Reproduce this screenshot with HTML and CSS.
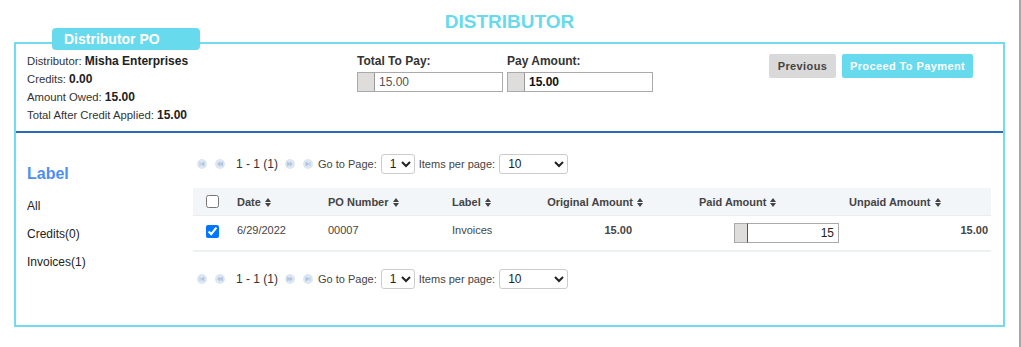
FILE: index.html
```html
<!DOCTYPE html>
<html lang="en">
<head>
    <meta charset="UTF-8">
    <meta name="viewport" content="width=device-width, initial-scale=1.0">
    <title>Distributor</title>
    <link rel="stylesheet" href="styles.css">
</head>
<body>
    <div class="page">
        <h1 class="title">DISTRIBUTOR</h1>

        <div class="box">
            <div class="tab">Distributor PO</div>

            <div class="top">
                <div class="info">
                    <p>Distributor: <strong>Misha Enterprises</strong></p>
                    <p>Credits: <strong>0.00</strong></p>
                    <p>Amount Owed: <strong>15.00</strong></p>
                    <p>Total After Credit Applied: <strong>15.00</strong></p>
                </div>

                <div class="pay-field">
                    <label>Total To Pay:</label>
                    <div class="input-group">
                        <span class="addon"></span>
                        <input type="text" class="readonly" value="15.00" readonly>
                    </div>
                </div>

                <div class="pay-field">
                    <label>Pay Amount:</label>
                    <div class="input-group">
                        <span class="addon"></span>
                        <input type="text" class="bold" value="15.00">
                    </div>
                </div>

                <div class="actions">
                    <button class="btn btn-grey">Previous</button>
                    <button class="btn btn-cyan">Proceed To Payment</button>
                </div>
            </div>

            <div class="bottom">
                <div class="sidebar">
                    <h2>Label</h2>
                    <a href="#">All</a>
                    <a href="#">Credits(0)</a>
                    <a href="#">Invoices(1)</a>
                </div>

                <div class="content">
                    <div class="pager">
                        <span class="pg-btn"><svg viewBox="0 0 10 10"><circle cx="5" cy="5" r="5"/><path d="M3 3v4M7 3L4.2 5 7 7z"/></svg></span>
                        <span class="pg-btn"><svg viewBox="0 0 10 10"><circle cx="5" cy="5" r="5"/><path d="M5 3L2.6 5 5 7zM7.6 3L5.2 5 7.6 7z"/></svg></span>
                        <span class="pg-text">1 - 1 (1)</span>
                        <span class="pg-btn"><svg viewBox="0 0 10 10"><circle cx="5" cy="5" r="5"/><path d="M2.4 3L4.8 5 2.4 7zM5 3L7.4 5 5 7z"/></svg></span>
                        <span class="pg-btn last"><svg viewBox="0 0 10 10"><circle cx="5" cy="5" r="5"/><path d="M7 3v4M3 3L5.8 5 3 7z"/></svg></span>
                        <span class="pg-label">Go to Page:</span>
                        <select class="sel-page"><option>1</option></select>
                        <span class="pg-label">Items per page:</span>
                        <select class="sel-items"><option>10</option><option>20</option></select>
                    </div>

                    <table class="grid">
                        <colgroup>
                            <col style="width:37px">
                            <col style="width:91px">
                            <col style="width:124px">
                            <col style="width:95px">
                            <col style="width:113px">
                            <col style="width:192px">
                            <col style="width:146px">
                        </colgroup>
                        <thead>
                            <tr>
                                <th class="c-check"><input type="checkbox"></th>
                                <th>Date <svg class="sort" viewBox="0 0 6 9"><path d="M0 4L3 0 6 4zM0 5L3 9 6 5z"/></svg></th>
                                <th>PO Number <svg class="sort" viewBox="0 0 6 9"><path d="M0 4L3 0 6 4zM0 5L3 9 6 5z"/></svg></th>
                                <th>Label <svg class="sort" viewBox="0 0 6 9"><path d="M0 4L3 0 6 4zM0 5L3 9 6 5z"/></svg></th>
                                <th class="c-orig">Original Amount <svg class="sort" viewBox="0 0 6 9"><path d="M0 4L3 0 6 4zM0 5L3 9 6 5z"/></svg></th>
                                <th class="c-paid">Paid Amount <svg class="sort" viewBox="0 0 6 9"><path d="M0 4L3 0 6 4zM0 5L3 9 6 5z"/></svg></th>
                                <th class="c-unpaid">Unpaid Amount <svg class="sort" viewBox="0 0 6 9"><path d="M0 4L3 0 6 4zM0 5L3 9 6 5z"/></svg></th>
                            </tr>
                        </thead>
                        <tbody>
                            <tr>
                                <td class="c-check"><input type="checkbox" checked></td>
                                <td>6/29/2022</td>
                                <td>00007</td>
                                <td>Invoices</td>
                                <td class="c-orig num">15.00</td>
                                <td class="c-paid-input">
                                    <div class="input-group small">
                                        <span class="addon"></span>
                                        <input type="text" value="15">
                                    </div>
                                </td>
                                <td class="c-unpaid num">15.00</td>
                            </tr>
                        </tbody>
                    </table>

                    <div class="pager pager-bottom">
                        <span class="pg-btn"><svg viewBox="0 0 10 10"><circle cx="5" cy="5" r="5"/><path d="M3 3v4M7 3L4.2 5 7 7z"/></svg></span>
                        <span class="pg-btn"><svg viewBox="0 0 10 10"><circle cx="5" cy="5" r="5"/><path d="M5 3L2.6 5 5 7zM7.6 3L5.2 5 7.6 7z"/></svg></span>
                        <span class="pg-text">1 - 1 (1)</span>
                        <span class="pg-btn"><svg viewBox="0 0 10 10"><circle cx="5" cy="5" r="5"/><path d="M2.4 3L4.8 5 2.4 7zM5 3L7.4 5 5 7z"/></svg></span>
                        <span class="pg-btn last"><svg viewBox="0 0 10 10"><circle cx="5" cy="5" r="5"/><path d="M7 3v4M3 3L5.8 5 3 7z"/></svg></span>
                        <span class="pg-label">Go to Page:</span>
                        <select class="sel-page"><option>1</option></select>
                        <span class="pg-label">Items per page:</span>
                        <select class="sel-items"><option>10</option><option>20</option></select>
                    </div>
                </div>
            </div>
        </div>
    </div>
</body>
</html>
```

FILE: styles.css
```css
body {
    margin: 0;
    font-family: 'Liberation Sans', Arial, sans-serif;
    font-size: 12px;
    color: #333;
    background: #fff;
}

.page {
    width: 1019px;
    height: 347px;
    border-right: 2px solid #a8a8a8;
    overflow: hidden;
}

.title {
    margin: 0;
    height: 42px;
    padding-top: 11px;
    box-sizing: border-box;
    text-align: center;
    font-size: 19px;
    line-height: 22px;
    font-weight: bold;
    color: #67daed;
}

.box {
    position: relative;
    margin-left: 14px;
    width: 991px;
    height: 285px;
    box-sizing: border-box;
    border: 2px solid #72dcee;
}

.tab {
    position: absolute;
    left: 36px;
    top: -16px;
    width: 148px;
    height: 22px;
    box-sizing: border-box;
    padding-left: 12px;
    background: #67daed;
    border-radius: 4px;
    color: #fff;
    font-size: 14px;
    font-weight: bold;
    line-height: 22px;
}

/* top section */
.top {
    display: flex;
    height: 89px;
    padding: 8px 30px 0 11px;
    box-sizing: border-box;
    border-bottom: 2px solid #2b6cb8;
}

.info {
    width: 330px;
}

.info p {
    margin: 0;
    font-size: 11.3px;
    line-height: 18px;
}

.info strong {
    font-size: 12px;
    color: #222;
}

.pay-field {
    width: 150px;
}

.pay-field label {
    display: block;
    font-weight: bold;
    line-height: 18px;
    color: #333;
}

.input-group {
    display: flex;
    width: 146px;
    height: 20px;
    margin-top: 2px;
}

.input-group .addon {
    width: 16px;
    background: #dedddb;
    border: 1px solid #aaa;
    border-right: 1px solid #999;
}

.input-group input {
    flex: 1;
    min-width: 0;
    margin: 0;
    padding: 0 4px;
    border: 1px solid #aaa;
    border-left: none;
    font-family: inherit;
    font-size: 12px;
    color: #333;
    outline: none;
}

.input-group input.readonly {
    color: #555;
}

.input-group input.bold {
    font-weight: bold;
    color: #111;
}

.actions {
    display: flex;
    gap: 6px;
    margin-left: auto;
    margin-top: 2px;
}

.btn {
    height: 24px;
    padding: 0;
    border: none;
    border-radius: 2px;
    font-family: inherit;
    font-size: 11px;
    font-weight: bold;
    letter-spacing: 0.4px;
    white-space: nowrap;
    cursor: pointer;
}

.btn-grey {
    width: 67px;
    background: #d9d9d9;
    color: #444;
}

.btn-cyan {
    width: 131px;
    background: #67daed;
    color: #fff;
}

/* bottom section */
.bottom {
    display: flex;
    padding: 21px 0 0 11px;
}

.sidebar {
    width: 166px;
}

.sidebar h2 {
    margin: 9px 0 0;
    font-size: 16px;
    line-height: 22px;
    color: #4e8ef0;
}

.sidebar a {
    display: block;
    margin-top: 10px;
    line-height: 18px;
    color: #222;
    text-decoration: none;
}

.sidebar h2 + a {
    margin-top: 12px;
}

.content {
    width: 798px;
}

.pager {
    display: flex;
    align-items: center;
    height: 20px;
    padding-left: 4px;
    color: #444;
}

.pg-btn {
    width: 10px;
    height: 10px;
    margin-right: 8px;
}

.pg-btn.last {
    margin-right: 5px;
}

.pg-btn svg {
    display: block;
    width: 10px;
    height: 10px;
}

.pg-btn circle {
    fill: #dde7f3;
}

.pg-btn path {
    fill: #b0c4dc;
    stroke: #b0c4dc;
    stroke-width: 0.8;
}

.pg-text {
    margin: 0 7px 0 3px;
    color: #333;
}

.pg-label {
    font-size: 11px;
}

.pager select {
    height: 20px;
    margin: 0 4px;
    padding: 0 0 0 4px;
    border: 1px solid #ccc;
    border-radius: 3px;
    background: #fff;
    font-family: inherit;
    font-size: 12px;
    color: #222;
}

.sel-page {
    width: 34px;
}

.sel-items {
    width: 69px;
}

.pager-bottom {
    margin-top: 17px;
}

.grid {
    width: 798px;
    margin-top: 14px;
    border-collapse: collapse;
    table-layout: fixed;
}

.grid th {
    height: 27px;
    padding: 0 0 0 7px;
    background: #f3f6f9;
    text-align: left;
    font-size: 11px;
    font-weight: bold;
    color: #444;
    white-space: nowrap;
    border-bottom: 1px solid #e8edf2;
}

.grid td {
    height: 27px;
    padding: 0 0 7px 7px;
    font-size: 11px;
    color: #444;
    border-bottom: 2px solid #eef1f4;
    vertical-align: middle;
}

.grid .c-check {
    padding-left: 13px;
}

.grid .c-check input {
    margin: 0;
    display: block;
}

.grid td.c-check input {
    margin-top: 4px;
}

.sort {
    width: 6px;
    height: 9px;
    margin-left: 1px;
    vertical-align: -1px;
    fill: #444;
}

.grid th.c-orig {
    text-align: right;
    padding-right: 10px;
}

.grid td.c-orig {
    text-align: right;
    padding-right: 21px;
}

.grid th.c-paid {
    padding-left: 46px;
}

.grid td.c-paid-input {
    padding: 0 0 0 81px;
    height: 34px;
}

.input-group.small {
    width: 105px;
    height: 20px;
    margin-top: 0;
}

.input-group.small .addon {
    width: 12px;
    border-right: 1px solid #555;
}

.input-group.small input {
    text-align: right;
    color: #222;
}

.grid th.c-unpaid {
    padding-left: 4px;
}

.grid td.c-unpaid {
    text-align: right;
    padding-right: 3px;
}

.num {
    font-weight: bold;
    color: #333;
}
```
